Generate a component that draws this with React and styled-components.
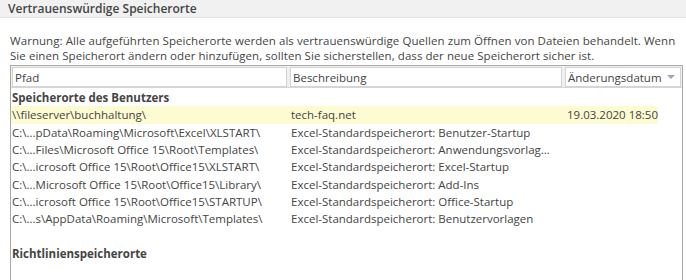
import React from 'react';
import styled, { createGlobalStyle } from 'styled-components';

const GlobalStyle = createGlobalStyle`
    html, body {
        margin: 0;
        padding: 0;
        background: #ffffff;
        overflow: hidden;
    }
    body {
        font-family: "Open Sans", "Noto Sans", sans-serif;
        font-size: 11.5px;
        color: #444444;
    }
`

const Page = styled.div`
    width: 686px;
    height: 280px;
    display: flex;
    flex-direction: column;
`

const TitleBar = styled.div`
    height: 24px;
    background: #f1f1f1;
    border-bottom: 1px solid #e4e4e4;
    display: flex;
    align-items: center;
    padding-left: 8px;
    font-weight: 600;
    font-size: 12px;
    color: #444444;
`

const Body = styled.div`
    padding: 15px 3px 0 10px;
    display: flex;
    flex-direction: column;
`

const Warning = styled.p`
    margin: 0 0 2px 0;
    line-height: 15px;
    letter-spacing: 0.06px;
`

const ListBox = styled.div`
    border: 1px solid #a9a9a9;
    border-bottom: none;
    height: 220px;
    display: flex;
    flex-direction: column;
`

const HeaderRow = styled.div`
    display: grid;
    grid-template-columns: 275px 272px 1fr;
    gap: 3px;
    padding: 1px 1px 0 1px;
    background: #f0f0f0;
    border-bottom: 1px solid #d6d6d6;
`

const HeaderCell = styled.div`
    height: 18px;
    background: #ffffff;
    border: 1px solid #d4d4d4;
    display: flex;
    align-items: center;
    justify-content: space-between;
    padding: 0 4px 0 2px;
    color: #444444;
`

const SortArrow = styled.span`
    width: 0;
    height: 0;
    border-left: 4px solid transparent;
    border-right: 4px solid transparent;
    border-top: 4px solid #a6a6a6;
    margin-right: 1px;
`

const Rows = styled.div`
    display: flex;
    flex-direction: column;
    padding-top: 1px;
`

const Row = styled.div`
    display: grid;
    grid-template-columns: 279px 276px 92px;
    height: 17.33px;
    align-items: center;
    background: ${(p) => (p.highlight ? '#fdfbd2' : 'transparent')};
    width: 647px;
    white-space: nowrap;
`

const GroupTitle = styled.div`
    height: 17.33px;
    display: flex;
    align-items: center;
    font-weight: 700;
    padding-left: 1px;
    color: #444444;
`

const Cell = styled.span`
    overflow: hidden;
    padding-left: 1px;
`

const Spacer = styled.div`
    height: 17.33px;
`

const entries = [
    { path: '\\\\fileserver\\buchhaltung\\', desc: 'tech-faq.net', date: '19.03.2020 18:50', highlight: true },
    { path: 'C:\\...pData\\Roaming\\Microsoft\\Excel\\XLSTART\\', desc: 'Excel-Standardspeicherort: Benutzer-Startup' },
    { path: 'C:\\...Files\\Microsoft Office 15\\Root\\Templates\\', desc: 'Excel-Standardspeicherort: Anwendungsvorlag...' },
    { path: 'C:\\...icrosoft Office 15\\Root\\Office15\\XLSTART\\', desc: 'Excel-Standardspeicherort: Excel-Startup' },
    { path: 'C:\\...Microsoft Office 15\\Root\\Office15\\Library\\', desc: 'Excel-Standardspeicherort: Add-Ins' },
    { path: 'C:\\...icrosoft Office 15\\Root\\Office15\\STARTUP\\', desc: 'Excel-Standardspeicherort: Office-Startup' },
    { path: 'C:\\...s\\AppData\\Roaming\\Microsoft\\Templates\\', desc: 'Excel-Standardspeicherort: Benutzervorlagen' },
];

export default function App() {
    return (
        <Page>
            <GlobalStyle />
            <TitleBar>Vertrauenswürdige Speicherorte</TitleBar>
            <Body>
                <Warning>
                    Warnung: Alle aufgeführten Speicherorte werden als vertrauenswürdige Quellen zum Öffnen von Dateien behandelt. Wenn
                    <br />
                    Sie einen Speicherort ändern oder hinzufügen, sollten Sie sicherstellen, dass der neue Speicherort sicher ist.
                </Warning>
                <ListBox>
                    <HeaderRow>
                        <HeaderCell>Pfad</HeaderCell>
                        <HeaderCell>Beschreibung</HeaderCell>
                        <HeaderCell>
                            Änderungsdatum
                            <SortArrow />
                        </HeaderCell>
                    </HeaderRow>
                    <Rows>
                        <GroupTitle>Speicherorte des Benutzers</GroupTitle>
                        {entries.map((item, index) => (
                            <Row highlight={item.highlight} key={index}>
                                <Cell>{item.path}</Cell>
                                <Cell>{item.desc}</Cell>
                                <Cell>{item.date || ''}</Cell>
                            </Row>
                        ))}
                        <Spacer />
                        <GroupTitle>Richtlinienspeicherorte</GroupTitle>
                    </Rows>
                </ListBox>
            </Body>
        </Page>
    );
}
